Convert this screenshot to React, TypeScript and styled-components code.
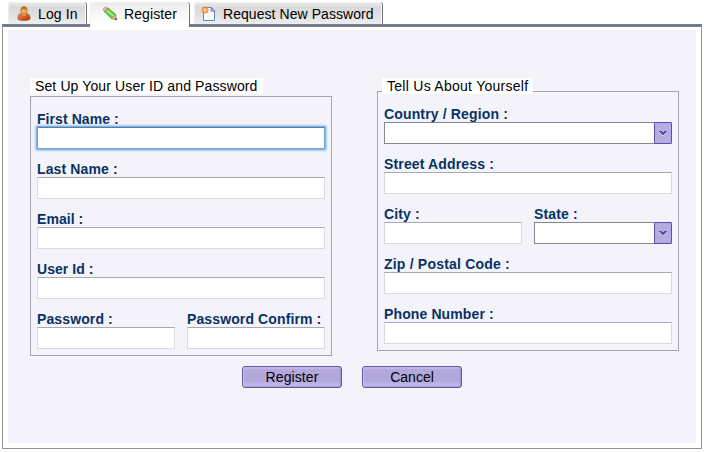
import React from "react";
import styled, { createGlobalStyle, css } from "styled-components";

const Global = createGlobalStyle`
  *, *::before, *::after { box-sizing: border-box; }
  body { margin: 0; background: #fff; overflow: hidden; font: 14px/16px "Liberation Sans", Arial, sans-serif; color: #000; }
`;

const Page = styled.div`
  display: flex;
  flex-direction: column;
  width: 704px;
  height: 452px;
  padding: 2px 2px 3px;
`;

const Tabs = styled.div`
  display: flex;
  gap: 3px;
  height: 22px;
  padding-left: 6px;
`;

const Tab = styled.button<{ $width: number; $active?: boolean; $inset?: number; $shift?: number; $track?: number }>`
  display: flex;
  align-items: center;
  flex: none;
  gap: 6px;
  width: ${(p) => p.$width}px;
  height: ${(p) => (p.$active ? 25 : 22)}px;
  margin-left: ${(p) => p.$shift ?? 0}px;
  padding: 2px 0 ${(p) => (p.$active ? 3 : 0)}px ${(p) => p.$inset ?? 8}px;
  border: 0;
  border-right: 1px solid #747782;
  border-radius: 3px 3px 0 0;
  background: ${(p) =>
    p.$active
      ? "linear-gradient(#ececec, #f4f4f4 35%, #fff 85%)"
      : "linear-gradient(#ececec, #dadada 25%, #e0e0e0 60%, #eeeeee)"};
  box-shadow: inset 1px 1px #f0f0f0, inset -1px 0 #f8f8f8;
  color: #000;
  font: inherit;
  letter-spacing: ${(p) => p.$track ?? 0}px;
  white-space: nowrap;
  z-index: ${(p) => (p.$active ? 1 : 0)};

  svg { flex: none; }
`;

const Frame = styled.main`
  display: flex;
  flex: 1;
  padding: 3px 5px 5px;
  border: 1px solid #8d9999;
  border-top: 3px solid #757b8c;
`;

const Canvas = styled.form`
  flex: 1;
  padding: 48px 17px 0 22px;
  background: #f4f3fa;
`;

const Columns = styled.div`
  display: flex;
  align-items: flex-start;
  justify-content: space-between;
`;

const Section = styled.section`
  width: 302px;
`;

const Legend = styled.h2<{ $width: number; $overlap?: boolean; $track: number }>`
  width: ${(p) => p.$width}px;
  height: 16px;
  margin: 0 0 ${(p) => (p.$overlap ? -3 : 2)}px ${(p) => (p.$overlap ? 5 : 0)}px;
  padding-left: 5px;
  background: #fff;
  font-size: 14px;
  font-weight: 400;
  line-height: 16px;
  letter-spacing: ${(p) => p.$track}px;
  white-space: nowrap;
  position: relative;
`;

const Fields = styled.div`
  display: grid;
  gap: 12px;
  padding: 14px 6px 6px;
  border: 1px solid #a5a5ad;
`;

const Pair = styled.div`
  display: grid;
  grid-template-columns: 138px 138px;
  gap: 12px;
`;

const FieldLabel = styled.label`
  display: flex;
  flex-direction: column;
  color: #083263;
  font-weight: 700;
`;

const LabelText = styled.span<{ $track: number }>`
  height: 16px;
  letter-spacing: ${(p) => p.$track}px;
  white-space: nowrap;
`;

const Input = styled.input<{ $focused?: boolean }>`
  width: 100%;
  height: 22px;
  padding: 2px 4px;
  border: 1px solid #dadae0;
  border-top-color: #a9a9af;
  border-radius: 0;
  background: #fff;
  outline: none;
  font: inherit;
  ${(p) =>
    p.$focused &&
    css`
      border-color: #73a8db;
      border-top-color: #527fb1;
      border-radius: 1px;
      box-shadow: 0 0 0 1px #84b3e0, 0 0 2px 2px #a9cced;
    `}
`;

const Combo = styled.div`
  display: flex;
  height: 22px;
`;

const ComboInput = styled.input`
  flex: 1;
  min-width: 0;
  padding: 2px 4px;
  border: 1px solid #86868f;
  border-right: 0;
  background: #fff;
  outline: none;
  font: inherit;
`;

const ComboButton = styled.button`
  display: grid;
  place-items: center;
  width: 18px;
  height: 22px;
  padding: 0;
  border: 1px solid #5e50b0;
  border-radius: 0 1px 1px 0;
  background: #b5acdf;
  box-shadow: inset 0 0 0 1px #b4a5ec;
`;

const Actions = styled.div`
  display: flex;
  gap: 20px;
  padding: 10px 0 0 212px;
`;

const Button = styled.button<{ $track: number }>`
  width: 100px;
  height: 22px;
  padding: 1px 0 0;
  border: 1px solid #635aa1;
  border-radius: 3px;
  background: linear-gradient(#c1b7e6 0 2px, #b2a8dc 2px 14px, #b6ace1 15px, #c0bbee 18px, #a49acd);
  box-shadow: inset 1px 0 #c9c0ed, inset -1px 0 #9d93cf;
  color: #000;
  font: inherit;
  line-height: 19px;
  letter-spacing: ${(p) => p.$track}px;
`;

const UserIcon = () => (
  <svg width="16" height="16" viewBox="0 0 16 16">
    <defs>
      <linearGradient id="coat" x2="1" y2="1">
        <stop stopColor="#ef9350" />
        <stop offset="1" stopColor="#ad2807" />
      </linearGradient>
    </defs>
    <path d="M2 13.2V11c0-1.8 1.2-3.3 3-3.3h5.8c1.8 0 3.2 1.5 3.2 3.3v2.2c-2 1.6-10 1.7-12 0z" fill="url(#coat)" stroke="#c34b20" strokeWidth=".7" />
    <path d="M5.5 7.9 8 10.5l2.4-2.6" fill="#e7a65f" />
    <ellipse cx="8" cy="4.5" rx="3.2" ry="3.9" fill="#e9ae55" stroke="#a46023" strokeWidth=".7" />
    <path d="M4.6 4.4C4.5-.5 10.9-.7 11.4 3.6c-2 .5-3.4-.2-4.5-1-.5 1-1.2 1.6-2.3 1.8z" fill="#bf741f" />
  </svg>
);

const PencilIcon = () => (
  <svg width="16" height="16" viewBox="0 0 16 16">
    <path d="M1.1 4.2C.6 2.6 2.8.5 4.5 1.1l2 1.6-3.6 3.6z" fill="#edb09b" stroke="#c8937d" strokeWidth=".6" />
    <path d="m2.4 5.8 3.6-3.9 7.8 6.6-3.9 4.4z" fill="#69c84b" stroke="#388526" strokeWidth=".6" />
    <path d="m4.6 4.2 7.6 6.5" stroke="#a5ed82" strokeWidth="1.7" />
    <path d="m13.8 8.5.9 5.4-4.9-1 .9-2 1.8-.4z" fill="#e6c37c" stroke="#947b51" strokeWidth=".5" />
    <path d="m12.5 13.3 1.8-1.6.4 2.3z" fill="#302e2b" />
  </svg>
);

const NewPageIcon = () => (
  <svg width="16" height="16" viewBox="0 0 16 16">
    <path d="M2.5 1.5h7.8l3.2 3.3v9.7h-11z" fill="#f8fbff" stroke="#6488b6" />
    <path d="M10 1.5v3.7h3.5z" fill="#bdd0e7" stroke="#5077a7" strokeWidth=".8" />
    <path d="m4.2.4.8 1.5 1.6-.5-.3 1.7 1.4.9-1.4.9.3 1.6-1.6-.3-.8 1.4-1-1.4-1.6.3.3-1.6L.6 4l1.3-.9-.3-1.7 1.7.5z" fill="#f3ad47" stroke="#ec7654" strokeWidth=".8" />
    <circle cx="4.2" cy="4" r="1.5" fill="#ffda57" />
  </svg>
);

const Chevron = () => (
  <svg width="8" height="6" viewBox="0 0 8 6" shapeRendering="crispEdges">
    <path d="M0 2h1v1h1v1h1v1h2V4h1V3h1V2h1v1H7v1H6v1H5v1H3V5H2V4H1V3H0z" fill="#d7cff3" />
    <path d="M0 1h3v1h2V1h3v1H7v1H6v1H5v1H3V4H2V3H1V2H0z" fill="#5d4dae" />
  </svg>
);

type FieldProps = { label: string; track?: number; focused?: boolean; select?: boolean };

const Field = ({ label, track = 0.15, focused, select }: FieldProps) => (
  <FieldLabel>
    <LabelText $track={track}>{label} :</LabelText>
    {select ? (
      <Combo>
        <ComboInput />
        <ComboButton type="button" aria-label={label}><Chevron /></ComboButton>
      </Combo>
    ) : (
      <Input $focused={focused} type={label.startsWith("Password") ? "password" : "text"} />
    )}
  </FieldLabel>
);

export default function App() {
  return (
    <Page>
      <Global />
      <Tabs>
        <Tab $width={79} $track={0.1}><UserIcon />Log In</Tab>
        <Tab $width={100} $active $inset={12} $track={0.1}><PencilIcon />Register</Tab>
        <Tab $width={189} $inset={7} $shift={1} $track={0.06}><NewPageIcon />Request New Password</Tab>
      </Tabs>
      <Frame>
        <Canvas>
          <Columns>
            <Section>
              <Legend $width={233} $track={0.12}>Set Up Your User ID and Password</Legend>
              <Fields>
                <Field label="First Name" track={0.07} focused />
                <Field label="Last Name" track={0.12} />
                <Field label="Email" track={0.05} />
                <Field label="User Id" track={0.05} />
                <Pair>
                  <Field label="Password" track={0.12} />
                  <Field label="Password Confirm" track={0.12} />
                </Pair>
              </Fields>
            </Section>
            <Section>
              <Legend $width={151} $overlap $track={0.27}>Tell Us About Yourself</Legend>
              <Fields>
                <Field label="Country / Region" select />
                <Field label="Street Address" />
                <Pair>
                  <Field label="City" />
                  <Field label="State" select />
                </Pair>
                <Field label="Zip / Postal Code" track={0.2} />
                <Field label="Phone Number" track={0.12} />
              </Fields>
            </Section>
          </Columns>
          <Actions>
            <Button type="button" $track={0.1}>Register</Button>
            <Button type="button" $track={0}>Cancel</Button>
          </Actions>
        </Canvas>
      </Frame>
    </Page>
  );
}
